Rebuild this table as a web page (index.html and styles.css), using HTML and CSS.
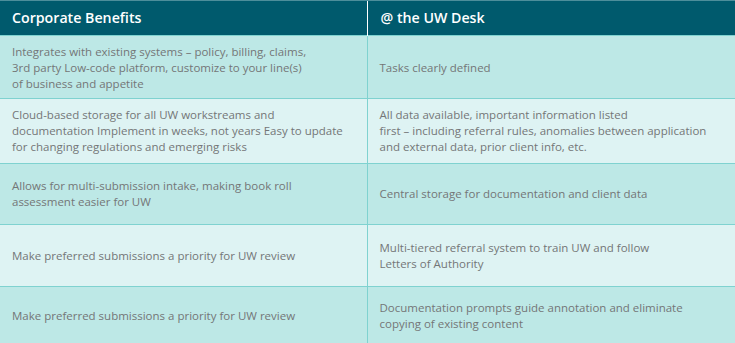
FILE: index.html
```html
<!DOCTYPE html>
<html>
<head>
<meta charset="utf-8">
<link rel="stylesheet" href="styles.css">
</head>
<body>
<table class="grid">
  <colgroup><col class="c1"><col class="c2"></colgroup>
  <thead>
    <tr class="head">
      <th>Corporate Benefits</th>
      <th>@ the UW Desk</th>
    </tr>
  </thead>
  <tbody>
    <tr class="r1 alt">
      <td>Integrates with existing systems – policy, billing, claims,<br>3rd party Low-code platform, customize to your line(s)<br>of business and appetite</td>
      <td>Tasks clearly defined</td>
    </tr>
    <tr class="r2">
      <td>Cloud-based storage for all UW workstreams and<br>documentation Implement in weeks, not years Easy to update<br>for changing regulations and emerging risks</td>
      <td>All data available, important information listed<br>first – including referral rules, anomalies between application<br>and external data, prior client info, etc.</td>
    </tr>
    <tr class="r3 alt">
      <td>Allows for multi-submission intake, making book roll<br>assessment easier for UW</td>
      <td>Central storage for documentation and client data</td>
    </tr>
    <tr class="r4">
      <td>Make preferred submissions a priority for UW review</td>
      <td>Multi-tiered referral system to train UW and follow<br>Letters of Authority</td>
    </tr>
    <tr class="r5 alt">
      <td>Make preferred submissions a priority for UW review</td>
      <td>Documentation prompts guide annotation and eliminate<br>copying of existing content</td>
    </tr>
  </tbody>
</table>
</body>
</html>
```
FILE: styles.css
```css
html, body {
  margin: 0;
  padding: 0;
  background: #ffffff;
  overflow: hidden;
}
body {
  width: 735px;
  height: 343px;
  font-family: "Open Sans", "Liberation Sans", sans-serif;
}
.grid {
  width: 735px;
  border-collapse: collapse;
  table-layout: fixed;
}
.c1 { width: 367px; }
.c2 { width: 368px; }
.head th {
  background: #005a6d;
  color: #ffffff;
  font-size: 14.2px;
  font-weight: 600;
  text-align: left;
  height: 35px;
  padding: 0 0 2px 12px;
  box-sizing: border-box;
  border-top: 1px solid #4d8e9b;
}
.head th + th {
  border-left: 1px solid #ffffff;
  padding-left: 13px;
}
td {
  color: #747677;
  font-size: 11.5px;
  line-height: 16px;
  padding: 0 8px 0 12px;
  vertical-align: middle;
  background: #def3f3;
  border-top: 1px solid #7fd2d0;
  box-sizing: border-box;
}
td + td {
  border-left: 1px solid #7fd2d0;
  padding-left: 12px;
}
.alt td { background: #bde8e6; }
.r1 td { height: 63px; padding-top: 1px; }
.r2 td { height: 65px; }
.r3 td { height: 61px; }
.r4 td { height: 62px; }
.r5 td { height: 62px; padding-bottom: 4px; }
```
